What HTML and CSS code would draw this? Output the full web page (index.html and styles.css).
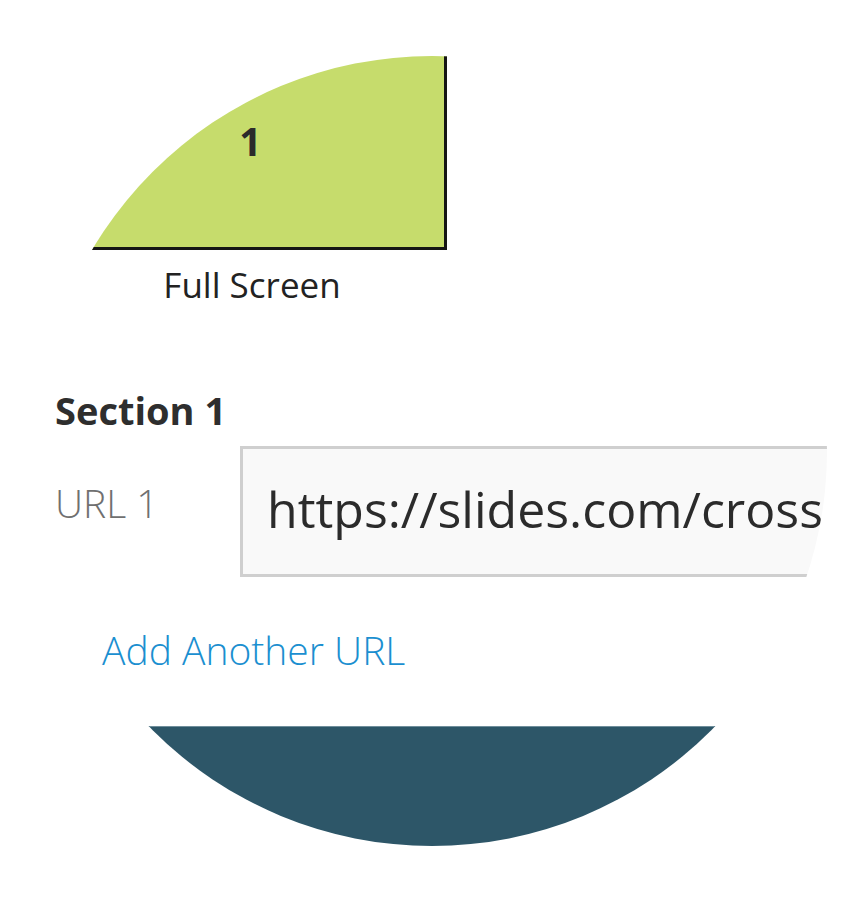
FILE: index.html
```html
<!DOCTYPE html>
<html lang="en">
<head>
<meta charset="utf-8">
<title>Layout settings</title>
<link rel="stylesheet" href="styles.css">
</head>
<body>
<div class="lens">
  <div class="layout-preview">
    <div class="layout-thumb"><span class="thumb-number">1</span></div>
    <div class="layout-caption">Full Screen</div>
  </div>
  <h2 class="section-title">Section 1</h2>
  <div class="url-row">
    <label class="url-label" for="url1">URL 1</label>
    <input class="url-input" id="url1" type="text" value="https://slides.com/crossover/deck" readonly>
  </div>
  <a class="add-link" href="#">Add Another URL</a>
  <div class="footer-bar"></div>
</div>
</body>
</html>
```

FILE: styles.css
```css
html, body {
  margin: 0;
  padding: 0;
  background: #ffffff;
}

body {
  font-family: "Open Sans", "Liberation Sans", sans-serif;
  color: #333333;
}

.lens {
  width: 790px;
  height: 790px;
  margin: 56px 0 0 37px;
  border-radius: 50%;
  overflow: hidden;
  background: #ffffff;
  display: flex;
  flex-direction: column;
  align-items: flex-start;
}

.layout-preview {
  margin-left: 16px;
  width: 394px;
  display: flex;
  flex-direction: column;
  align-items: center;
}

.layout-thumb {
  box-sizing: border-box;
  width: 394px;
  height: 194px;
  background: #c6dc6c;
  border-right: 3px solid #151515;
  border-bottom: 3px solid #151515;
  display: flex;
  justify-content: center;
  align-items: flex-start;
  padding-top: 65px;
  padding-left: 4px;
}

.thumb-number {
  font-size: 39px;
  font-weight: 700;
  line-height: 1;
  color: #2b2b2b;
}

.layout-caption {
  margin-top: 11px;
  padding-left: 4px;
  font-size: 35px;
  line-height: 48px;
  color: #222222;
}

.section-title {
  margin: 78px 0 0 18px;
  font-size: 38px;
  font-weight: 700;
  line-height: 46px;
  color: #2e2e2e;
}

.url-row {
  margin: 13px 0 0 18px;
  display: flex;
  align-items: flex-start;
}

.url-label {
  width: 185px;
  padding-top: 34px;
  font-size: 39px;
  font-weight: 300;
  line-height: 46px;
  color: #707070;
}

.url-input {
  box-sizing: border-box;
  width: 720px;
  height: 131px;
  margin: 0;
  padding: 0 24px 6px;
  border: 3px solid #cfcfcf;
  border-radius: 0;
  background: #f9f9f9;
  font-family: "Open Sans", "Liberation Sans", sans-serif;
  font-size: 50px;
  color: #2b2b2b;
  outline: none;
}

.add-link {
  margin: 50px 0 0 65px;
  font-size: 39px;
  font-weight: 300;
  line-height: 46px;
  color: #1b8fd0;
  text-decoration: none;
}

.footer-bar {
  flex: none;
  margin-top: 53px;
  width: 100%;
  height: 240px;
  background: #2d5668;
  border-top: 1px solid #6f8e9b;
}
```
